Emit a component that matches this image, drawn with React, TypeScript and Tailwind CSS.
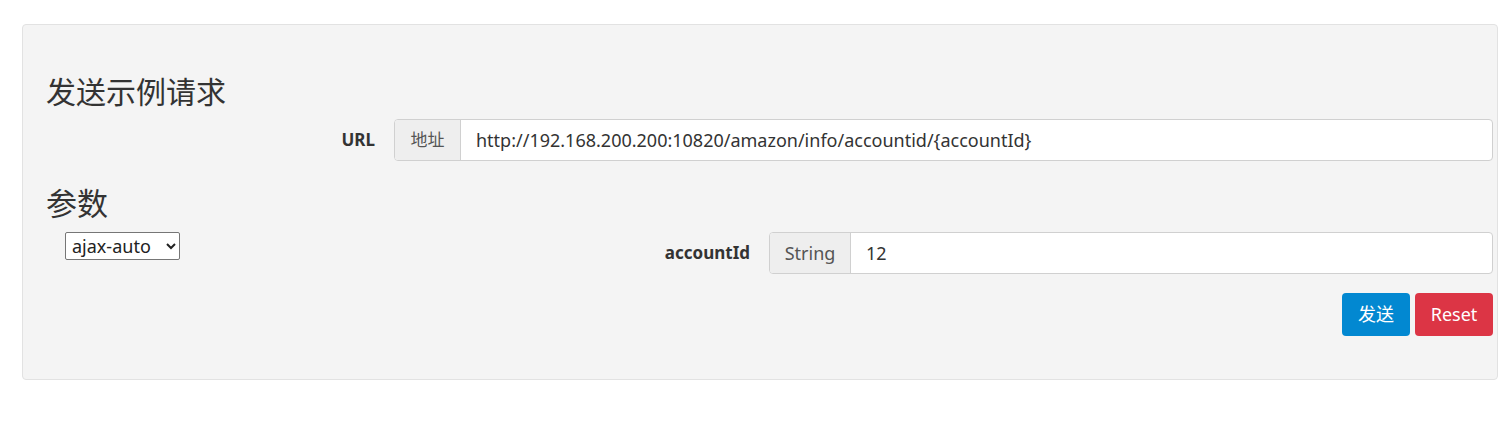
import { useState } from "react";

const font = "font-['Noto_Sans','Noto_Sans_CJK_SC',sans-serif]";

const App = () => {
  const [mode, setMode] = useState("ajax-auto");
  const [url, setUrl] = useState(
    "http://192.168.200.200:10820/amazon/info/accountid/{accountId}"
  );
  const [accountId, setAccountId] = useState("12");

  return (
    <div className={`bg-white min-h-[433px] pt-6 px-[22px] ${font} text-[#333]`}>
      <div className="w-[1476px] h-[356px] bg-[#f4f4f4] border border-[#e2e2e2] rounded pt-[49px] pl-[23px] pr-[4px]">
        <h3 className="text-[30px] leading-[36px] h-[36px]">发送示例请求</h3>

        {/* URL row */}
        <div className="flex items-center mt-[9px] h-[42px]">
          <label className="w-[329px] text-right font-bold text-[17px]">URL</label>
          <div className="flex flex-1 ml-[19px] h-[42px] border border-[#d0d0d0] rounded bg-white overflow-hidden">
            <span className="w-[66px] flex items-center justify-center bg-[#eeeeee] border-r border-[#d0d0d0] text-[17px] text-[#555]">
              地址
            </span>
            <input
              value={url}
              onChange={(e) => setUrl(e.target.value)}
              className="flex-1 px-[15px] text-[18px] text-[#333] outline-none"
            />
          </div>
        </div>

        <h3 className="text-[31px] leading-[36px] h-[36px] mt-[24px]">参数</h3>

        <div className="flex items-start mt-[11px]">
          <div className="w-[329px] pl-[19px]">
            <select
              value={mode}
              onChange={(e) => setMode(e.target.value)}
              className="h-[28px] w-[115px] border border-[#767676] rounded-[2px] bg-white text-[18px] leading-none px-[2px] text-[#222]"
            >
              <option>ajax-auto</option>
              <option>ajax-json</option>
              <option>form</option>
            </select>
          </div>
          <div className="flex-1 flex items-center h-[42px]">
            <label className="w-[375px] text-right font-bold text-[17px]">
              accountId
            </label>
            <div className="flex flex-1 ml-[19px] h-[42px] border border-[#d0d0d0] rounded bg-white overflow-hidden">
              <span className="w-[81px] flex items-center justify-center bg-[#eeeeee] border-r border-[#d0d0d0] text-[18px] text-[#555]">
                String
              </span>
              <input
                value={accountId}
                onChange={(e) => setAccountId(e.target.value)}
                className="flex-1 px-[15px] text-[18px] text-[#333] outline-none"
              />
            </div>
          </div>
        </div>

        <div className="flex justify-end gap-[5px] mt-[19px]">
          <button className="h-[43px] w-[68px] rounded bg-[#0288d1] text-white text-[18px]">
            发送
          </button>
          <button className="h-[43px] w-[78px] rounded bg-[#dc3545] text-white text-[18px]">
            Reset
          </button>
        </div>
      </div>
    </div>
  );
};

export default App;
